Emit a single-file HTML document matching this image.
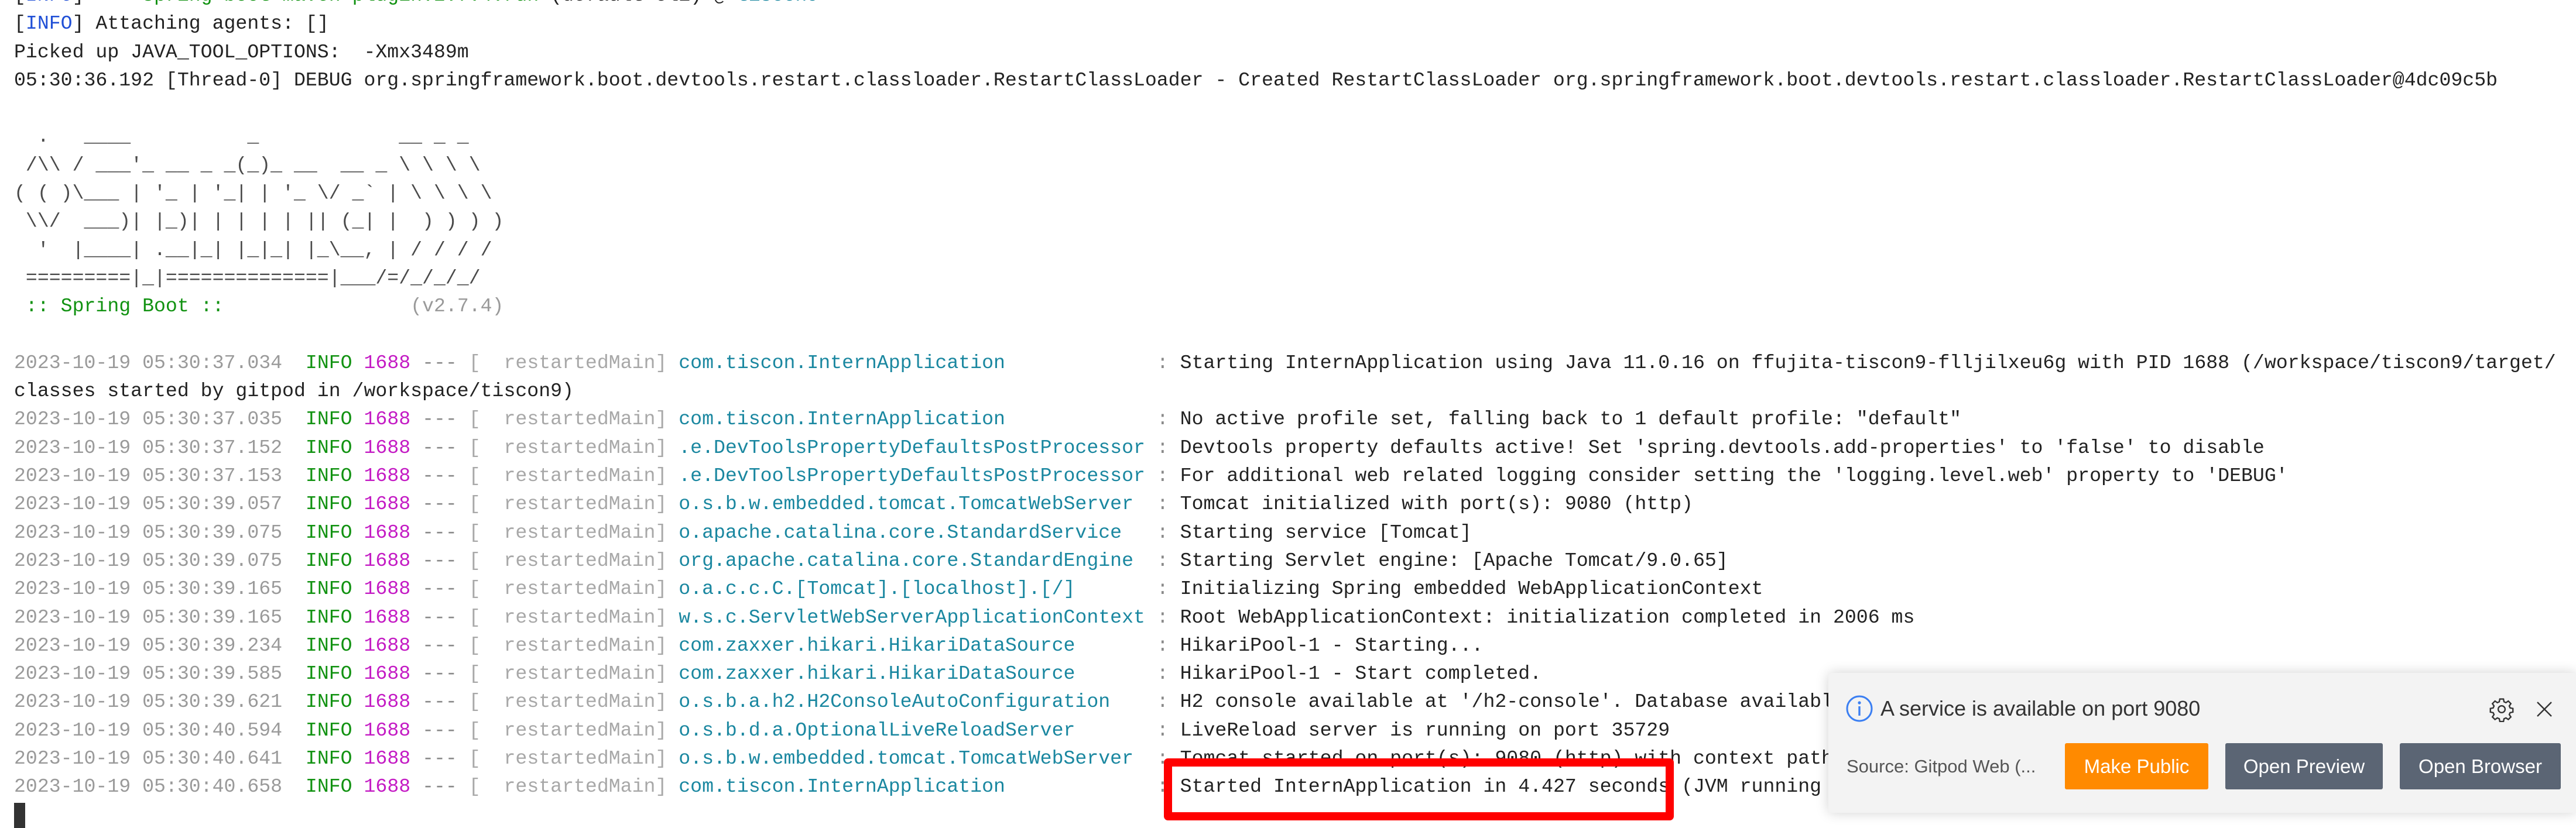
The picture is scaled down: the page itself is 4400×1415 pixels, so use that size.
<!DOCTYPE html>
<html><head><meta charset="utf-8">
<style>
html,body{margin:0;padding:0;background:#fff;width:4400px;height:1415px;overflow:hidden;position:relative}
pre{margin:0;position:absolute;left:24px;top:-32px;font-family:"Liberation Mono",monospace;font-size:33.2px;line-height:48.3px;color:#222;white-space:pre}
.ts{color:#9a9a9a}.in{color:#119211}.pid{color:#c41bc4}.f{color:#8a8a8a}.th{color:#a8a8a8}.lg{color:#1a87a0}
.bl{color:#1f4fd6}.gr{color:#119211}.bn{color:#4a4a4a}
#cur{position:absolute;left:24px;top:1372px;width:19px;height:43px;background:#333}
#box{position:absolute;left:1988px;top:1296px;width:843px;height:78px;border:14px solid #ff0000;border-radius:7px}
#panel{position:absolute;left:3123px;top:1150px;width:1277px;height:239px;background:#f3f3f3;box-shadow:0 0 22px rgba(0,0,0,.18);border-radius:6px 0 0 6px;font-family:"Liberation Sans",sans-serif}
.btn{position:absolute;top:120px;height:79px;line-height:79px;text-align:center;color:#fff;font-size:33px;border-radius:3px}
</style></head><body>
<pre>[<span class="bl">INFO</span>] <b>---</b> <span class="gr">spring-boot-maven-plugin:2.7.4:run</span> (default-cli) @ <span class="lg">tiscon9</span> <b>---</b>
[<span class="bl">INFO</span>] Attaching agents: []
Picked up JAVA_TOOL_OPTIONS:  -Xmx3489m
05:30:36.192 [Thread-0] DEBUG org.springframework.boot.devtools.restart.classloader.RestartClassLoader - Created RestartClassLoader org.springframework.boot.devtools.restart.classloader.RestartClassLoader@4dc09c5b

<span class="bn">  .   ____          _            __ _ _
 /\\ / ___'_ __ _ _(_)_ __  __ _ \ \ \ \
( ( )\___ | '_ | '_| | '_ \/ _` | \ \ \ \
 \\/  ___)| |_)| | | | | || (_| |  ) ) ) )
  '  |____| .__|_| |_|_| |_\__, | / / / /
 =========|_|==============|___/=/_/_/_/</span>
<span class="gr"> :: Spring Boot :: </span>              <span class="ts"> (v2.7.4)</span>

<span class="ts">2023-10-19 05:30:37.034</span>  <span class="in">INFO</span> <span class="pid">1688</span> <span class="f">---</span> <span class="th">[  restartedMain]</span> <span class="lg">com.tiscon.InternApplication            </span> <span class="f">:</span> Starting InternApplication using Java 11.0.16 on ffujita-tiscon9-flljilxeu6g with PID 1688 (/workspace/tiscon9/target/
classes started by gitpod in /workspace/tiscon9)
<span class="ts">2023-10-19 05:30:37.035</span>  <span class="in">INFO</span> <span class="pid">1688</span> <span class="f">---</span> <span class="th">[  restartedMain]</span> <span class="lg">com.tiscon.InternApplication            </span> <span class="f">:</span> No active profile set, falling back to 1 default profile: "default"
<span class="ts">2023-10-19 05:30:37.152</span>  <span class="in">INFO</span> <span class="pid">1688</span> <span class="f">---</span> <span class="th">[  restartedMain]</span> <span class="lg">.e.DevToolsPropertyDefaultsPostProcessor</span> <span class="f">:</span> Devtools property defaults active! Set 'spring.devtools.add-properties' to 'false' to disable
<span class="ts">2023-10-19 05:30:37.153</span>  <span class="in">INFO</span> <span class="pid">1688</span> <span class="f">---</span> <span class="th">[  restartedMain]</span> <span class="lg">.e.DevToolsPropertyDefaultsPostProcessor</span> <span class="f">:</span> For additional web related logging consider setting the 'logging.level.web' property to 'DEBUG'
<span class="ts">2023-10-19 05:30:39.057</span>  <span class="in">INFO</span> <span class="pid">1688</span> <span class="f">---</span> <span class="th">[  restartedMain]</span> <span class="lg">o.s.b.w.embedded.tomcat.TomcatWebServer </span> <span class="f">:</span> Tomcat initialized with port(s): 9080 (http)
<span class="ts">2023-10-19 05:30:39.075</span>  <span class="in">INFO</span> <span class="pid">1688</span> <span class="f">---</span> <span class="th">[  restartedMain]</span> <span class="lg">o.apache.catalina.core.StandardService  </span> <span class="f">:</span> Starting service [Tomcat]
<span class="ts">2023-10-19 05:30:39.075</span>  <span class="in">INFO</span> <span class="pid">1688</span> <span class="f">---</span> <span class="th">[  restartedMain]</span> <span class="lg">org.apache.catalina.core.StandardEngine </span> <span class="f">:</span> Starting Servlet engine: [Apache Tomcat/9.0.65]
<span class="ts">2023-10-19 05:30:39.165</span>  <span class="in">INFO</span> <span class="pid">1688</span> <span class="f">---</span> <span class="th">[  restartedMain]</span> <span class="lg">o.a.c.c.C.[Tomcat].[localhost].[/]      </span> <span class="f">:</span> Initializing Spring embedded WebApplicationContext
<span class="ts">2023-10-19 05:30:39.165</span>  <span class="in">INFO</span> <span class="pid">1688</span> <span class="f">---</span> <span class="th">[  restartedMain]</span> <span class="lg">w.s.c.ServletWebServerApplicationContext</span> <span class="f">:</span> Root WebApplicationContext: initialization completed in 2006 ms
<span class="ts">2023-10-19 05:30:39.234</span>  <span class="in">INFO</span> <span class="pid">1688</span> <span class="f">---</span> <span class="th">[  restartedMain]</span> <span class="lg">com.zaxxer.hikari.HikariDataSource      </span> <span class="f">:</span> HikariPool-1 - Starting...
<span class="ts">2023-10-19 05:30:39.585</span>  <span class="in">INFO</span> <span class="pid">1688</span> <span class="f">---</span> <span class="th">[  restartedMain]</span> <span class="lg">com.zaxxer.hikari.HikariDataSource      </span> <span class="f">:</span> HikariPool-1 - Start completed.
<span class="ts">2023-10-19 05:30:39.621</span>  <span class="in">INFO</span> <span class="pid">1688</span> <span class="f">---</span> <span class="th">[  restartedMain]</span> <span class="lg">o.s.b.a.h2.H2ConsoleAutoConfiguration   </span> <span class="f">:</span> H2 console available at '/h2-console'. Database available at 'jdbc:h2:mem:testdb'
<span class="ts">2023-10-19 05:30:40.594</span>  <span class="in">INFO</span> <span class="pid">1688</span> <span class="f">---</span> <span class="th">[  restartedMain]</span> <span class="lg">o.s.b.d.a.OptionalLiveReloadServer      </span> <span class="f">:</span> LiveReload server is running on port 35729
<span class="ts">2023-10-19 05:30:40.641</span>  <span class="in">INFO</span> <span class="pid">1688</span> <span class="f">---</span> <span class="th">[  restartedMain]</span> <span class="lg">o.s.b.w.embedded.tomcat.TomcatWebServer </span> <span class="f">:</span> Tomcat started on port(s): 9080 (http) with context path ''
<span class="ts">2023-10-19 05:30:40.658</span>  <span class="in">INFO</span> <span class="pid">1688</span> <span class="f">---</span> <span class="th">[  restartedMain]</span> <span class="lg">com.tiscon.InternApplication            </span> <span class="f">:</span> Started InternApplication in 4.427 seconds (JVM running for 5.102)
</pre>
<div id="cur"></div>
<div id="box"></div>
<div id="panel">
  <svg style="position:absolute;left:29px;top:37px" width="48" height="48" viewBox="0 0 48 48"><circle cx="24" cy="24" r="21" fill="none" stroke="#3b7ff2" stroke-width="3"/><circle cx="24" cy="14" r="2.6" fill="#3b7ff2"/><rect x="22.3" y="20" width="3.4" height="16" fill="#3b7ff2"/></svg>
  <div style="position:absolute;left:89px;top:38px;font-size:36px;line-height:46px;color:#333">A service is available on port 9080</div>
  <svg style="position:absolute;left:1128px;top:40px" width="44" height="44" viewBox="0 0 24 24" fill="none" stroke="#333" stroke-width="1.3"><circle cx="12" cy="12" r="3.2"/><path d="M10.3 2.5h3.4l.5 2.6 1.8.8 2.2-1.5 2.4 2.4-1.5 2.2.8 1.8 2.6.5v3.4l-2.6.5-.8 1.8 1.5 2.2-2.4 2.4-2.200-1.5-1.8.8-.5 2.6h-3.4l-.5-2.6-1.8-.8-2.2 1.5-2.4-2.4 1.5-2.2-.8-1.8-2.6-.5v-3.4l2.6-.5.8-1.8-1.5-2.2 2.4-2.4 2.2 1.5 1.8-.8z"/></svg>
  <svg style="position:absolute;left:1207px;top:46px" width="32" height="32" viewBox="0 0 32 32" stroke="#333" stroke-width="2.4"><path d="M4 4L28 28M28 4L4 28"/></svg>
  <div style="position:absolute;left:31px;top:138px;font-size:31px;line-height:44px;color:#555">Source: Gitpod Web (...</div>
  <div class="btn" style="left:404px;width:245px;background:#ff8a00">Make Public</div>
  <div class="btn" style="left:678px;width:269px;background:#5b6574">Open Preview</div>
  <div class="btn" style="left:976px;width:275px;background:#5b6574">Open Browser</div>
</div>
</body></html>
